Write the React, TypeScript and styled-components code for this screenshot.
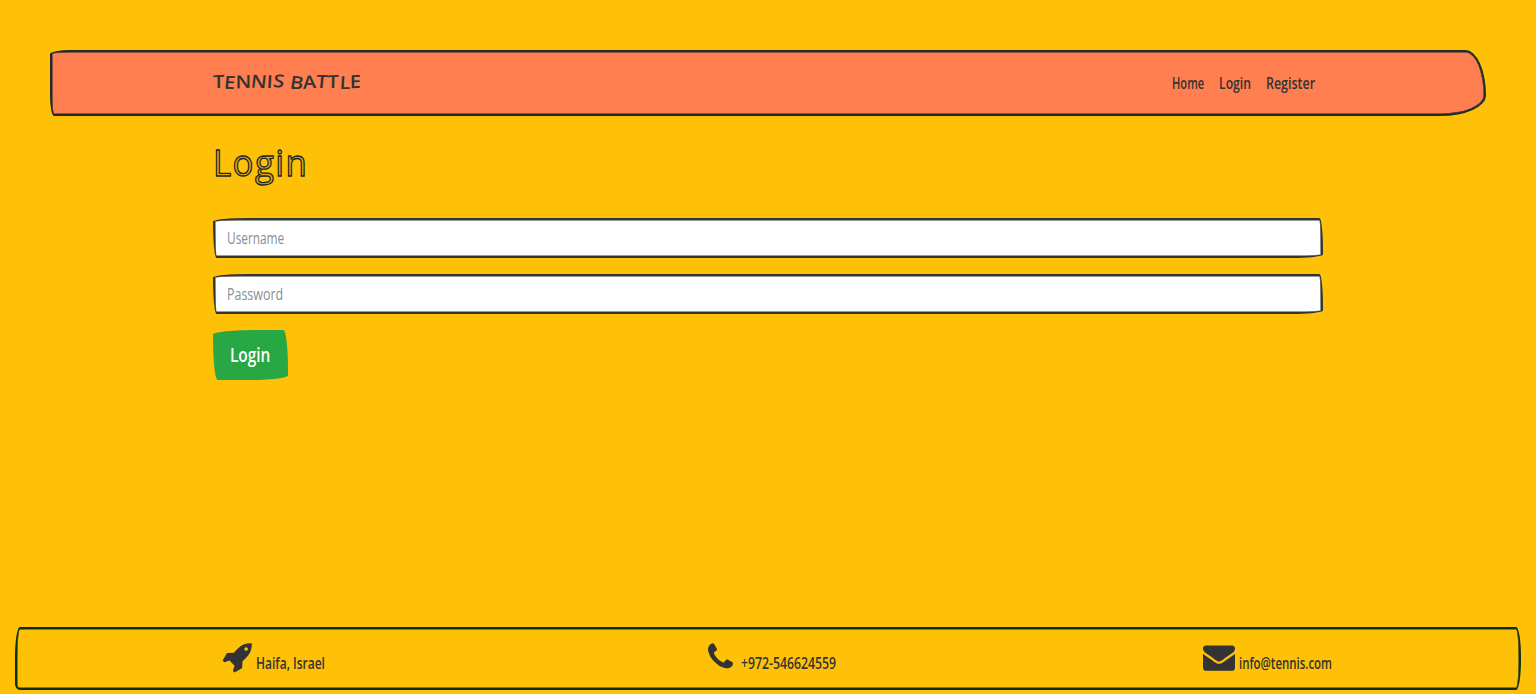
import React, { useLayoutEffect, useRef, useState } from 'react';
import styled, { createGlobalStyle, css } from 'styled-components';

const GlobalStyle = createGlobalStyle`
  *, *::before, *::after { box-sizing: border-box; }
  html, body { margin: 0; background: #ffc107; }
  body {
    font-family: 'Open Sans', 'Noto Sans', sans-serif;
    font-size: 16px;
    line-height: 24px;
    color: #333;
    overflow: hidden;
  }
`;

const Page = styled.div`
  display: flex;
  flex-direction: column;
  height: 694px;
  padding: 50px 15px 4px;
`;

const Navbar = styled.nav`
  display: flex;
  justify-content: space-between;
  align-items: center;
  height: 66px;
  margin: 0 35px;
  padding: 0 169px 0 161px;
  background: #ff7f50;
  border: 2px solid #222b2b;
  box-shadow: inset 0 0 0 0.5px #222b2b;
  border-radius: 25px 25px 55px 5px / 5px 55px 25px 25px;
`;

const Brand = styled.a`
  display: flex;
  font-size: 18px;
  font-weight: 600;
  color: #333;
  padding-bottom: 4px;
`;

const BrandLetter = styled.span<{ $tilt: number; $drop: number }>`
  display: block;
  white-space: pre;
  transform: translateY(${p => p.$drop}px) rotate(${p => p.$tilt}deg) skewX(-3deg);
`;

const NavLinks = styled.div`
  display: flex;
  gap: 15px;
`;

const NavLink = styled.a`
  display: block;
  color: #333;
  font-weight: 600;
`;

const Main = styled.main`
  flex: 1;
  display: flex;
  flex-direction: column;
  align-items: flex-start;
  margin: 0 198px;
  padding-top: 22px;
`;

const Title = styled.h1`
  margin: 0 0 32px;
  height: 48px;
  font-size: 37px;
  line-height: 48px;
  font-weight: 400;
  letter-spacing: 1.5px;
  color: rgba(33, 37, 41, 0.12);
  -webkit-text-stroke: 1.3px #212529;
`;

const sketchCorners = css`
  border-radius: 255px 25px 225px 25px / 25px 225px 25px 255px;
`;

const Field = styled.label`
  display: flex;
  align-items: center;
  width: 1110px;
  height: 40px;
  margin-bottom: 16px;
  padding-left: 12px;
  background: #fff;
  border: 2px solid #333;
  box-shadow: inset 0 0 0 0.5px #333;
  color: #868e96;
  font-weight: 400;
  ${sketchCorners}
`;

const Submit = styled.button`
  display: flex;
  align-items: center;
  justify-content: center;
  width: 75px;
  height: 50px;
  padding: 0 2px 0 0;
  border: 0;
  background: #28a745;
  color: #fff;
  font: 600 20px/30px 'Open Sans', 'Noto Sans', sans-serif;
  ${sketchCorners}
`;

const Footer = styled.footer`
  display: flex;
  justify-content: space-between;
  height: 63px;
  padding: 12px 187px 0 205px;
  border: 2px solid #0d3015;
  box-shadow: inset 0 0 0 0.5px #0d3015;
  border-radius: 5px 5px 5px 5px / 30px 30px 30px 6px;
`;

const Contact = styled.div<{ $gap: number; $indent?: number }>`
  display: flex;
  gap: ${p => p.$gap}px;
  padding-left: ${p => p.$indent ?? 0}px;
  font-weight: 600;
`;

const ContactText = styled.div`
  padding-top: 10px;
`;

const Icon = styled.svg`
  display: block;
  height: 32px;
  fill: #333;
`;

const FitBox = styled.span<{ $width: number }>`
  display: block;
  width: ${p => p.$width}px;
  white-space: nowrap;
`;

const FitInner = styled.span`
  display: inline-flex;
  transform-origin: 0 50%;
`;

/* Condenses or widens its text so that it fills a given width. */
function Fit({ width, children }: { width: number; children: React.ReactNode }) {
  const ref = useRef<HTMLSpanElement>(null);
  const [scale, setScale] = useState(1);
  useLayoutEffect(() => {
    if (ref.current) setScale(width / ref.current.offsetWidth);
  }, [width]);
  return (
    <FitBox $width={width}>
      <FitInner ref={ref} style={{ transform: `scaleX(${scale})` }}>{children}</FitInner>
    </FitBox>
  );
}

const tilts = [-3, 2, -3, 3, 0, 4, 0, 5, -5, 2, -2, 0, -3];
const drops = [0, 1, 0, 0, 0, -0.5, 0, 1, 0.5, 0, 0, 0.5, 0];

const RocketIcon = () => (
  <Icon viewBox="0 0 1664 1792" width="30">
    <path d="M1440 448q0-40-28-68t-68-28-68 28-28 68 28 68 68 28 68-28 28-68zm224-288q0 249-75.5 430.5t-253.5 360.5q-81 80-195 176l-20 379q-2 16-16 26l-384 224q-7 4-16 4-12 0-23-9l-64-64q-13-14-8-32l85-276-281-281-276 85q-3 1-9 1-14 0-23-9l-64-64q-17-19-5-39l224-384q10-14 26-16l379-20q96-114 176-195 188-187 358-258t431-71q14 0 24 9.500t10 22.500z" />
  </Icon>
);

const PhoneIcon = () => (
  <Icon viewBox="192 0 1408 1792" width="25">
    <path d="M1600 1240q0 27-10 70.500t-21 68.500q-21 50-122 106-94 51-186 51-27 0-53-3.500t-57.500-12.500-47-14.500-55.500-20.500-49-18q-98-35-175-83-127-79-264-216t-216-264q-48-77-83-175-3-9-18-49t-20.500-55.500-14.500-47-12.500-57.500-3.500-53q0-92 51-186 56-101 106-122 25-11 68.500-21t70.500-10q14 0 21 3 18 6 53 76 11 19 30 54t35 63.500 31 53.500q3 4 17.500 25t21.500 35.500 7 28.500q0 20-28.500 50t-62 55-62 53-28.500 46q0 9 5 22.500t8.500 20.500 14 24 11.500 19q76 137 174 235t235 174q2 1 19 11.500t24 14 20.500 8.500 22.500 5q18 0 46-28.500t53-62 55-62 50-28.500q14 0 28.500 7t35.500 21.500 25 17.500q25 15 53.500 31t63.500 35 54 30q70 35 76 53 3 7 3 21z" />
  </Icon>
);

const MailIcon = () => (
  <Icon viewBox="0 0 1792 1792" width="32">
    <path d="M1792 710v794q0 66-47 113t-113 47h-1472q-66 0-113-47t-47-113v-794q44 49 101 87 362 246 497 345 57 42 92.500 65.500t94.500 48 110 24.500h2q51 0 110-24.500t94.500-48 92.500-65.500q170-123 498-345 57-39 100-87zm0-294q0 79-49 151t-122 123q-376 261-468 325-10 7-42.500 31t-54 38.500-52 32.500-57.500 27-50 9h-2q-23 0-50-9t-57.500-27-52-32.500-54-38.500-42.500-31q-91-64-262-182.500t-205-142.500q-62-42-117-115.500t-55-136.500q0-78 41.500-130t118.500-52h1472q65 0 112.500 47t47.500 113z" />
  </Icon>
);

export default function App() {
  return (
    <>
      <GlobalStyle />
      <Page>
        <Navbar>
          <Brand>
            <Fit width={149}>
              {'TENNIS BATTLE'.split('').map((c, i) => (
                <BrandLetter key={i} $tilt={tilts[i]} $drop={drops[i]}>{c}</BrandLetter>
              ))}
            </Fit>
          </Brand>
          <NavLinks>
            <NavLink><Fit width={32}>Home</Fit></NavLink>
            <NavLink><Fit width={32}>Login</Fit></NavLink>
            <NavLink><Fit width={49}>Register</Fit></NavLink>
          </NavLinks>
        </Navbar>
        <Main>
          <Title><Fit width={95}>Login</Fit></Title>
          <Field><Fit width={57}>Username</Fit></Field>
          <Field><Fit width={56}>Password</Fit></Field>
          <Submit><Fit width={40}>Login</Fit></Submit>
        </Main>
        <Footer>
          <Contact $gap={4}>
            <RocketIcon />
            <ContactText><Fit width={69}>Haifa, Israel</Fit></ContactText>
          </Contact>
          <Contact $gap={8} $indent={16}>
            <PhoneIcon />
            <ContactText><Fit width={95}>+972-546624559</Fit></ContactText>
          </Contact>
          <Contact $gap={4}>
            <MailIcon />
            <ContactText><Fit width={93}>info@tennis.com</Fit></ContactText>
          </Contact>
        </Footer>
      </Page>
    </>
  );
}
